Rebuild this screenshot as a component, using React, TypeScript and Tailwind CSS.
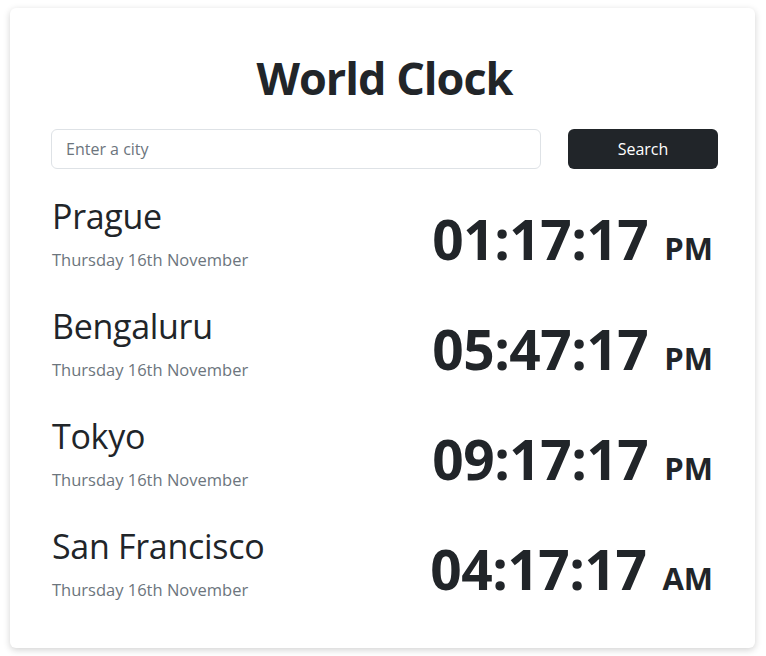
import { useState } from "react";

type City = { name: string; date: string; time: string; period: "AM" | "PM" };

const cities: City[] = [
  { name: "Prague", date: "Thursday 16th November", time: "01:17:17", period: "PM" },
  { name: "Bengaluru", date: "Thursday 16th November", time: "05:47:17", period: "PM" },
  { name: "Tokyo", date: "Thursday 16th November", time: "09:17:17", period: "PM" },
  { name: "San Francisco", date: "Thursday 16th November", time: "04:17:17", period: "AM" },
];

export default function App() {
  const [query, setQuery] = useState("");

  return (
    <div className="min-h-screen bg-white pt-2 pl-[10px] font-['Open_Sans','Noto_Sans',sans-serif] text-[#212529]">
      <div className="w-[745px] rounded-md bg-white pt-[41px] pr-[37px] pb-[46px] pl-[41px] shadow-[0_2px_7px_rgba(0,0,0,0.18)]">
        <h1 className="text-center text-[45px] font-bold leading-[58px] tracking-[-1px]">World Clock</h1>

        {/* Search */}
        <form
          className="mt-[22px] flex gap-[27px]"
          onSubmit={(e) => e.preventDefault()}
        >
          <input
            value={query}
            onChange={(e) => setQuery(e.target.value)}
            placeholder="Enter a city"
            className="h-10 w-[490px] rounded-md border border-[#dee2e6] bg-white px-[14px] text-base text-[#212529] outline-none placeholder:text-[#6c757d]"
          />
          <button
            type="submit"
            className="h-10 w-[150px] rounded-md bg-[#212529] text-base text-white"
          >
            Search
          </button>
        </form>

        {/* Clocks */}
        <div className="mt-[26px] flex flex-col gap-[33px] pr-[5px]">
          {cities.map((c) => (
            <div key={c.name} className="flex items-end justify-between">
              <div className="pl-px">
                <div className="text-[34px] font-medium leading-[43px] tracking-[-0.3px]">{c.name}</div>
                <div className="mt-[10px] text-[16.5px] leading-6 text-[#6c757d]">{c.date}</div>
              </div>
              <div className="flex items-baseline gap-[16px] font-bold leading-[48px]">
                <span className="text-[55px] tracking-[-0.5px]">{c.time}</span>
                <span className="text-[31px]">{c.period}</span>
              </div>
            </div>
          ))}
        </div>
      </div>
    </div>
  );
}
